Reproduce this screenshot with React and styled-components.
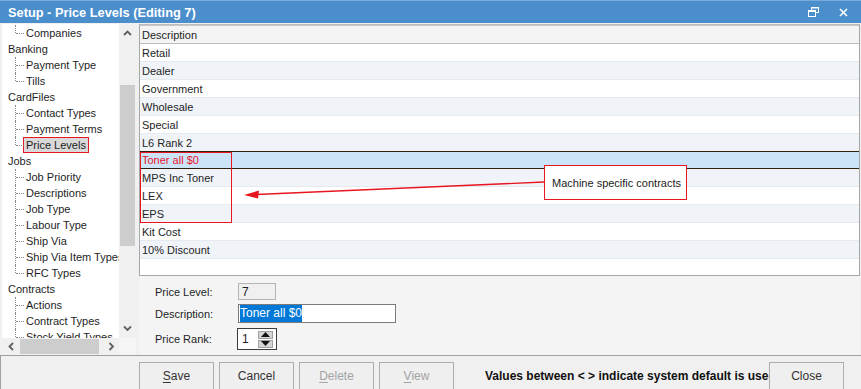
import styled, { createGlobalStyle } from 'styled-components';

const GlobalStyle = createGlobalStyle`
  html, body { margin: 0; padding: 0; }
  body {
    font-family: "Liberation Sans", Arial, sans-serif;
    font-size: 11px;
    color: #1e1e1e;
    overflow: hidden;
  }
  * { box-sizing: border-box; }
`;

const Window = styled.div`
  position: relative;
  width: 861px;
  height: 389px;
  background: #f0f0f0;
  display: flex;
  flex-direction: column;
  overflow: hidden;
`;

const TitleBar = styled.div`
  height: 23px;
  border-top: 1px solid #7aaadb;
  background: #4a8ecc;
  display: flex;
  align-items: center;
  justify-content: space-between;
  padding: 0 13px 0 8px;
  color: #fff;
  font-weight: bold;
  font-size: 12.8px;
`;

const TitleIcons = styled.div`
  display: flex;
  align-items: center;
  gap: 20px;
`;

const Main = styled.div`
  display: flex;
  height: 332px;
  padding: 1px 1px 0 2px;
`;

const LeftPanel = styled.div`
  width: 134px;
  display: grid;
  grid-template-columns: 117px 17px;
  grid-template-rows: 1fr 17px;
`;

const Tree = styled.div`
  background: #fff;
  padding-top: 1px;
  overflow: hidden;
`;

const TreeRow = styled.div`
  position: relative;
  height: 16px;
  display: flex;
  align-items: center;
  white-space: nowrap;
  padding-left: ${p => (p.$child ? 21 : 3)}px;

  ${p => p.$child && `
    &::before {
      content: '';
      position: absolute;
      left: 13px;
      top: 0;
      height: ${p.$last ? 8 : 16}px;
      border-left: 1px dotted #8a8a8a;
    }
    &::after {
      content: '';
      position: absolute;
      left: 14px;
      top: 8px;
      width: 8px;
      border-top: 1px dotted #8a8a8a;
    }
  `}
`;

const TreeLabel = styled.span`
  padding: 1px 2px;
  border: 1px solid ${p => (p.$selected ? '#e8161f' : 'transparent')};
  background: ${p => (p.$selected ? '#d9d9d9' : 'transparent')};
  color: #1e1e1e;
`;

const VScroll = styled.div`
  background: #f0f0f0;
  position: relative;
  display: flex;
  flex-direction: column;
  align-items: center;
`;

const VThumb = styled.div`
  position: absolute;
  left: 1px;
  right: 1px;
  top: 61px;
  height: 161px;
  background: #cdcdcd;
`;

const ArrowSlot = styled.div`
  position: absolute;
  ${p => (p.$end ? 'bottom: 6px;' : 'top: 6px;')}
  display: flex;
  z-index: 1;
`;

const HScroll = styled.div`
  background: #f0f0f0;
  position: relative;
  display: flex;
  align-items: center;
  justify-content: space-between;
  padding: 0 4px 0 6px;
`;

const HThumb = styled.div`
  position: absolute;
  left: 18px;
  top: 1px;
  bottom: 1px;
  width: 79px;
  background: #cdcdcd;
`;

const Corner = styled.div`
  background: #f5f5f5;
`;

const RightColumn = styled.div`
  flex: 1;
  margin-left: 3px;
  display: flex;
  flex-direction: column;
`;

const GridBox = styled.div`
  height: 252px;
  border: 1px solid #a7a7a7;
  border-top-color: #bdbdbd;
  background: #fff;
`;

const HeaderRow = styled.div`
  height: 19px;
  background: #f4f4f4;
  border-top: 1px solid #c8c8c8;
  border-bottom: 1px solid #bdbdbd;
  display: flex;
  align-items: center;
  padding-left: 2px;
`;

const DataRow = styled.div`
  height: 18px;
  display: flex;
  align-items: center;
  padding-left: 2px;
  background: ${p => (p.$selected ? '#cce4f7' : p.$alt ? '#f0f4f9' : '#fff')};
  border-bottom: 1px solid ${p => (p.$selected ? '#2e1e10' : '#e6eaf0')};
  border-top: 1px solid ${p => (p.$selected ? '#2e1e10' : 'transparent')};
  color: ${p => (p.$selected ? '#e8162f' : '#1e1e1e')};
  margin-top: ${p => (p.$selected ? -1 : 0)}px;
`;

const FormPanel = styled.div`
  flex: 1;
  background: #f4f4f4;
  padding: 7px 0 0 16px;
`;

const FormRow = styled.div`
  display: flex;
  align-items: center;
  height: ${p => p.$h}px;
  margin-top: ${p => p.$gap || 0}px;
`;

const FieldLabel = styled.span`
  width: 83px;
`;

const ReadOnlyBox = styled.div`
  width: 38px;
  height: 17px;
  border: 1px solid #b4b4b4;
  background: #f0f0f0;
  padding-left: 3px;
  display: flex;
  align-items: center;
  font-size: 12px;
`;

const TextBox = styled.div`
  width: 158px;
  height: 19px;
  border: 1px solid #7a7a7a;
  background: #fff;
  padding-left: 1px;
  display: flex;
  align-items: center;
  font-size: 12px;
`;

const Selected = styled.span`
  background: #0078d7;
  color: #fff;
  padding: 1px 0 2px;
`;

const Spinner = styled.div`
  width: 40px;
  height: 22px;
  margin-left: -1px;
  border: 1px solid #3c3c3c;
  background: #fff;
  display: flex;
  align-items: center;
  justify-content: space-between;
  padding: 0 3px 0 4px;
  font-size: 12px;
`;

const SpinButtons = styled.div`
  display: flex;
  flex-direction: column;
  gap: 1px;
`;

const SpinButton = styled.div`
  width: 15px;
  height: 8px;
  background: #d6d6d6;
  border: 1px solid #a0a0a0;
  display: flex;
  align-items: center;
  justify-content: center;
`;

const BottomBar = styled.div`
  height: 34px;
  border-top: 1px solid #a0a0a0;
  border-left: 1px solid #a0a0a0;
  display: flex;
  align-items: flex-start;
  padding: 6px 0 0 138px;
`;

const Buttons = styled.div`
  display: flex;
  gap: 5px;
`;

const Button = styled.div`
  width: 75px;
  height: 28px;
  background: #efefef;
  border: 1px solid #adadad;
  display: flex;
  align-items: center;
  justify-content: center;
  font-size: 12px;
  color: ${p => (p.$disabled ? '#a3a3a3' : '#333')};

  u { text-decoration: underline; text-underline-offset: 2px; }
`;

const Notice = styled.div`
  width: 284px;
  margin-left: 31px;
  height: 28px;
  display: flex;
  align-items: center;
  font-weight: bold;
  font-size: 12px;
  white-space: nowrap;
  overflow: hidden;
  color: #111;
`;

const RedBox = styled.div`
  position: absolute;
  left: 140px;
  top: 152px;
  width: 92px;
  height: 71px;
  border: 1.5px solid #e8161f;
  pointer-events: none;
`;

const Callout = styled.div`
  position: absolute;
  left: 544px;
  top: 165px;
  width: 143px;
  height: 35px;
  border: 1.5px solid #e8161f;
  background: #fff;
  display: flex;
  align-items: center;
  padding-left: 7px;
  color: #222;
`;

const Overlay = styled.svg`
  position: absolute;
  left: 0;
  top: 0;
  pointer-events: none;
`;

const tree = [
  { label: 'Companies', child: true, last: true },
  { label: 'Banking' },
  { label: 'Payment Type', child: true },
  { label: 'Tills', child: true, last: true },
  { label: 'CardFiles' },
  { label: 'Contact Types', child: true },
  { label: 'Payment Terms', child: true },
  { label: 'Price Levels', child: true, last: true, selected: true },
  { label: 'Jobs' },
  { label: 'Job Priority', child: true },
  { label: 'Descriptions', child: true },
  { label: 'Job Type', child: true },
  { label: 'Labour Type', child: true },
  { label: 'Ship Via', child: true },
  { label: 'Ship Via Item Types', child: true },
  { label: 'RFC Types', child: true, last: true },
  { label: 'Contracts' },
  { label: 'Actions', child: true },
  { label: 'Contract Types', child: true },
  { label: 'Stock Yield Types', child: true },
];

const levels = [
  'Retail', 'Dealer', 'Government', 'Wholesale', 'Special', 'L6 Rank 2',
  'Toner all $0', 'MPS Inc Toner', 'LEX', 'EPS', 'Kit Cost', '10% Discount',
];

function Chevron({ dir }) {
  const pts = {
    up: '1,5 4.5,1.5 8,5',
    down: '1,1.5 4.5,5 8,1.5',
    left: '5,1 1.5,4.5 5,8',
    right: '1.5,1 5,4.5 1.5,8',
  }[dir];
  const vertical = dir === 'up' || dir === 'down';
  return (
    <svg width={vertical ? 9 : 7} height={vertical ? 7 : 9} style={{ position: 'relative', zIndex: 1 }}>
      <polyline points={pts} fill="none" stroke="#606060" strokeWidth="1.8" />
    </svg>
  );
}

export default function App() {
  return (
    <Window>
      <GlobalStyle />
      <TitleBar>
        <span>Setup - Price Levels (Editing 7)</span>
        <TitleIcons>
          <svg width="11" height="10" viewBox="0 0 11 10">
            <rect x="3.5" y="0.5" width="7" height="5" fill="none" stroke="#fff" />
            <rect x="0.5" y="3.5" width="7" height="6" fill="#4a8ecc" stroke="#fff" />
            <line x1="0" y1="4.5" x2="8" y2="4.5" stroke="#fff" />
            <line x1="3" y1="1" x2="11" y2="1" stroke="#fff" />
          </svg>
          <svg width="9" height="9" viewBox="0 0 9 9">
            <path d="M1 1 L8 8 M8 1 L1 8" stroke="#fff" strokeWidth="1.6" />
          </svg>
        </TitleIcons>
      </TitleBar>

      <Main>
        <LeftPanel>
          <Tree>
            {tree.map(item => (
              <TreeRow key={item.label} $child={item.child} $last={item.last}>
                <TreeLabel $selected={item.selected}>{item.label}</TreeLabel>
              </TreeRow>
            ))}
          </Tree>
          <VScroll>
            <VThumb />
            <ArrowSlot>
              <Chevron dir="up" />
            </ArrowSlot>
            <ArrowSlot $end>
              <Chevron dir="down" />
            </ArrowSlot>
          </VScroll>
          <HScroll>
            <HThumb />
            <Chevron dir="left" />
            <Chevron dir="right" />
          </HScroll>
          <Corner />
        </LeftPanel>

        <RightColumn>
          <GridBox>
            <HeaderRow>Description</HeaderRow>
            {levels.map((name, i) => (
              <DataRow key={name} $alt={i % 2 === 1} $selected={i === 6}>
                {name}
              </DataRow>
            ))}
          </GridBox>
          <FormPanel>
            <FormRow $h={17}>
              <FieldLabel>Price Level:</FieldLabel>
              <ReadOnlyBox>7</ReadOnlyBox>
            </FormRow>
            <FormRow $h={19} $gap={4}>
              <FieldLabel>Description:</FieldLabel>
              <TextBox>
                <Selected>Toner all $0</Selected>
              </TextBox>
            </FormRow>
            <FormRow $h={22} $gap={5}>
              <FieldLabel>Price Rank:</FieldLabel>
              <Spinner>
                <span>1</span>
                <SpinButtons>
                  <SpinButton>
                    <svg width="9" height="5"><polygon points="0,5 4.5,0 9,5" fill="#111" /></svg>
                  </SpinButton>
                  <SpinButton>
                    <svg width="9" height="5"><polygon points="0,0 4.5,5 9,0" fill="#111" /></svg>
                  </SpinButton>
                </SpinButtons>
              </Spinner>
            </FormRow>
          </FormPanel>
        </RightColumn>
      </Main>

      <BottomBar>
        <Buttons>
          <Button><span><u>S</u>ave</span></Button>
          <Button>Cancel</Button>
          <Button $disabled><span><u>D</u>elete</span></Button>
          <Button $disabled><span><u>V</u>iew</span></Button>
        </Buttons>
        <Notice>Values between &lt; &gt; indicate system default is used</Notice>
        <Button>Close</Button>
      </BottomBar>

      <RedBox />
      <Callout>Machine specific contracts</Callout>
      <Overlay width="861" height="389">
        <line x1="544" y1="182" x2="256" y2="194.5" stroke="#e8161f" strokeWidth="1.3" />
        <polygon points="244,195 259,190.5 258,198.5" fill="#e8161f" />
      </Overlay>
    </Window>
  );
}
